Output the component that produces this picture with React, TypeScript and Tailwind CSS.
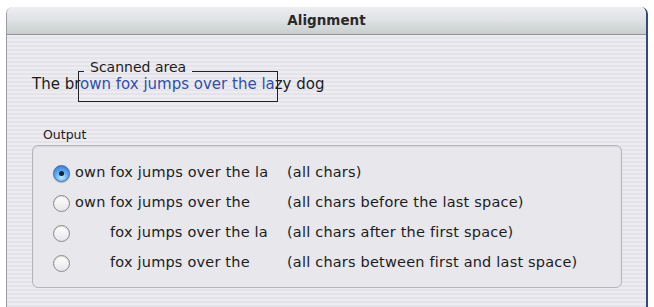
const stripes =
  'bg-[repeating-linear-gradient(180deg,#ededf1_0px,#ededf1_2px,#e3e3e9_2px,#e3e3e9_4px)]'

const options = [
  { text: 'own fox jumps over the la', note: '(all chars)', indent: false, checked: true },
  { text: 'own fox jumps over the', note: '(all chars before the last space)', indent: false, checked: false },
  { text: 'fox jumps over the la', note: '(all chars after the first space)', indent: true, checked: false },
  { text: 'fox jumps over the', note: '(all chars between first and last space)', indent: true, checked: false },
]

function Radio({ checked }: { checked: boolean }) {
  if (checked) {
    return (
      <span className="w-[17px] h-[17px] rounded-full border border-[#3a6fb5] bg-[radial-gradient(circle_at_50%_75%,#c6e8ff_0%,#62acf2_45%,#2d68c0_100%)] flex items-center justify-center shrink-0 shadow-[0_1px_1px_rgba(0,0,0,0.25)]">
        <span className="w-[5px] h-[5px] rounded-full bg-[#0f203c]" />
      </span>
    )
  }
  return (
    <span className="w-[17px] h-[17px] rounded-full border border-[#8a8a8e] bg-[linear-gradient(180deg,#ffffff,#e6e6ea)] shrink-0 shadow-[inset_0_1px_1px_rgba(0,0,0,0.15)]" />
  )
}

export default function App() {
  return (
    <div
      className="w-[654px] h-[307px] bg-white pt-[7px] pl-[6px] pr-[6px] overflow-hidden text-[#1c1c1c]"
      style={{ fontFamily: '"DejaVu Sans", "Liberation Sans", sans-serif' }}
    >
      <div className="h-[300px] flex flex-col rounded-t-[7px] border-l border-[#9a9aa2] border-r-2 border-r-[#34468c] overflow-hidden">
        {/* Title bar */}
        <div className="h-[28px] shrink-0 flex items-center justify-center bg-[linear-gradient(180deg,#eeeef2_0%,#dfe1e4_50%,#c8cfce_100%)] border-b border-[#8e9292]">
          <span className="text-[13.5px] font-semibold text-[#2a2a2a]">Alignment</span>
        </div>

        {/* Body */}
        <div className={`flex-1 flex flex-col ${stripes}`}>
          <div className="mt-[41px] pl-[25px] text-[15px] leading-[16px] whitespace-nowrap">
            The br
            <span className="relative text-[#2f4fb0]">
              own fox jumps over the la
              <span className="absolute left-[-2px] right-[-3px] top-[-4px] bottom-[-9px] border-l border-r border-b border-[#222]">
                <span className="absolute top-[-11px] left-[-1px] right-[-1px] h-[14px] flex items-center">
                  <span className="w-[6px] h-px bg-[#222] mt-[8px]" />
                  <span className="px-[6px] text-[14px] leading-[14px] text-[#1c1c1c]">Scanned area</span>
                  <span className="flex-1 h-px bg-[#222] mt-[8px]" />
                </span>
              </span>
            </span>
            zy dog
          </div>

          <div className="mt-[35px] pl-[36px] text-[12.5px] leading-[15px] text-[#1c1c1c]">Output</div>

          <div className="mt-[3px] ml-[25px] mr-[24px] h-[143px] rounded-[6px] border border-[#b4b4ba] bg-[#e7e7ec] shadow-[inset_0_1px_1px_rgba(0,0,0,0.08)] pt-[12px] pl-[20px]">
            {options.map((o) => (
              <div key={o.text} className="h-[30px] flex items-center text-[14.5px] tracking-[0.2px] whitespace-nowrap">
                <Radio checked={o.checked} />
                <span className={`w-[212px] ml-[5px] ${o.indent ? 'pl-[35px]' : ''}`}>{o.text}</span>
                <span>{o.note}</span>
              </div>
            ))}
          </div>
        </div>
      </div>
    </div>
  )
}
